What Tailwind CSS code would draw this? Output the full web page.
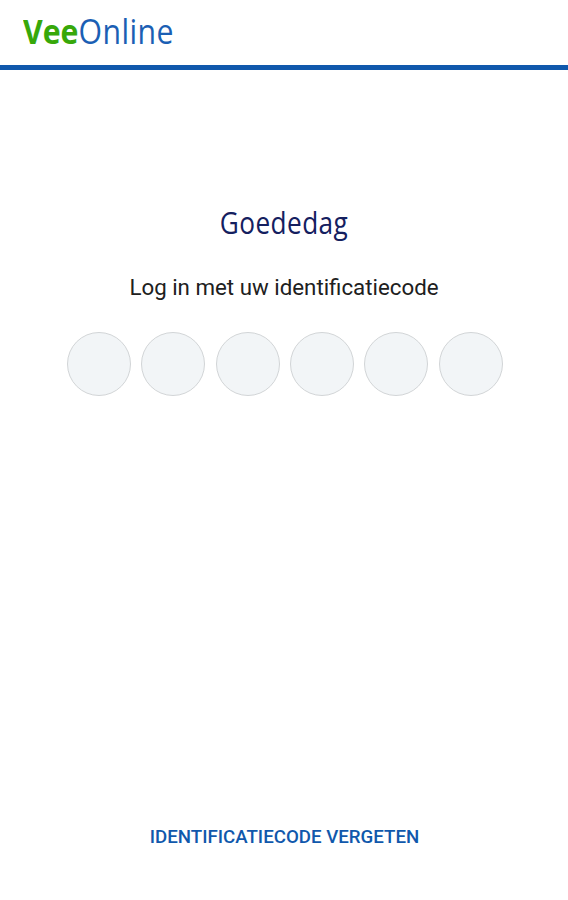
<!DOCTYPE html>
<html lang="nl">
<head>
    <meta charset="UTF-8">
    <meta name="viewport" content="width=device-width, initial-scale=1.0">
    <title>VeeOnline</title>
    <script src="https://cdn.jsdelivr.net/npm/@tailwindcss/browser@4"></script>
</head>
<body class="bg-white font-['Roboto',sans-serif]">
    <div class="flex h-[900px] w-[568px] flex-col overflow-hidden">

        <!-- Header -->
        <header class="flex h-[70px] shrink-0 items-start border-b-[5px] border-[#1058ac] pl-[23px] pt-[11px]">
            <h1 class="flex origin-left scale-x-[0.89] font-['Open_Sans',sans-serif] text-[34px] leading-10 whitespace-nowrap text-[#1b5fb4]">
                <span class="font-bold text-[#37a80a]">Vee</span><span class="tracking-[0.5px]">Online</span>
            </h1>
        </header>

        <!-- Login -->
        <main class="flex flex-1 flex-col items-center pt-[132px]">
            <h2 class="mr-px scale-x-[0.845] font-['Open_Sans',sans-serif] text-[31px] leading-10 tracking-[0.5px] text-[#14205f]">Goededag</h2>
            <p class="mt-[30px] text-[22.3px] leading-[30px] whitespace-nowrap text-[#202020]">Log in met uw identificatiecode</p>
            <div class="mt-[30.4px] ml-[1.4px] flex gap-[10.4px]">
                <span class="size-16 rounded-full border border-[#d2d5d7] bg-[#f2f5f7]"></span>
                <span class="size-16 rounded-full border border-[#d2d5d7] bg-[#f2f5f7]"></span>
                <span class="size-16 rounded-full border border-[#d2d5d7] bg-[#f2f5f7]"></span>
                <span class="size-16 rounded-full border border-[#d2d5d7] bg-[#f2f5f7]"></span>
                <span class="size-16 rounded-full border border-[#d2d5d7] bg-[#f2f5f7]"></span>
                <span class="size-16 rounded-full border border-[#d2d5d7] bg-[#f2f5f7]"></span>
            </div>
        </main>

        <!-- Forgotten code -->
        <footer class="flex justify-center pb-[48px] pl-px">
            <a href="#" class="text-[18.7px] leading-[30px] font-medium whitespace-nowrap text-[#1058ac]">IDENTIFICATIECODE VERGETEN</a>
        </footer>
    </div>
</body>
</html>
